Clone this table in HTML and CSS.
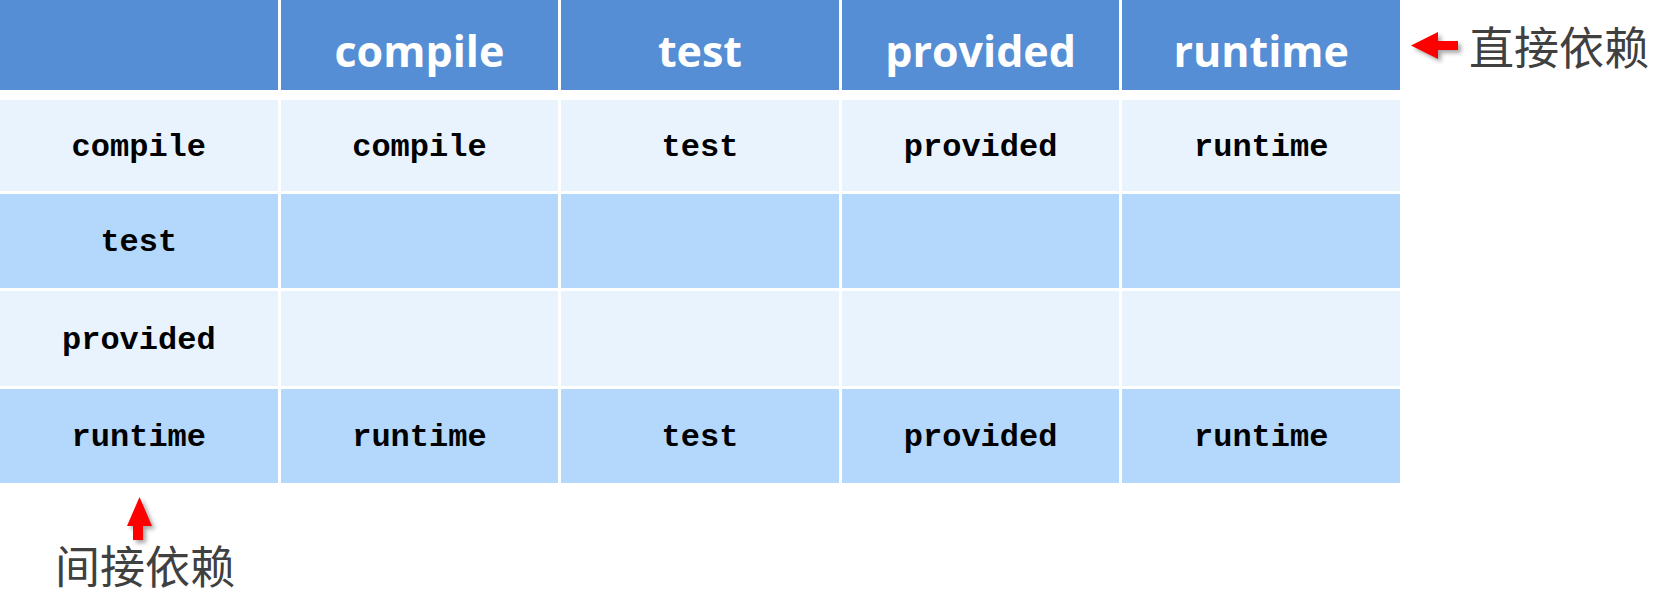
FILE: index.html
```html
<!DOCTYPE html>
<html lang="zh">
<head>
<meta charset="utf-8">
<title>Maven scope 传递</title>
<link rel="stylesheet" href="styles.css">
</head>
<body>
<div class="page">
  <div class="top">
    <div class="table">
      <div class="thead">
        <div class="th"></div>
        <div class="th">compile</div>
        <div class="th">test</div>
        <div class="th">provided</div>
        <div class="th">runtime</div>
      </div>
      <div class="tbody">
        <div class="td light">compile</div>
        <div class="td light">compile</div>
        <div class="td light">test</div>
        <div class="td light">provided</div>
        <div class="td light">runtime</div>

        <div class="td dark">test</div>
        <div class="td dark"></div>
        <div class="td dark"></div>
        <div class="td dark"></div>
        <div class="td dark"></div>

        <div class="td light">provided</div>
        <div class="td light"></div>
        <div class="td light"></div>
        <div class="td light"></div>
        <div class="td light"></div>

        <div class="td dark">runtime</div>
        <div class="td dark">runtime</div>
        <div class="td dark">test</div>
        <div class="td dark">provided</div>
        <div class="td dark">runtime</div>
      </div>
    </div>
    <div class="callout-right">
      <svg class="arrow-left" width="47" height="27" viewBox="0 0 47 27">
        <polygon points="0,13.5 27,0 27,9 47,9 47,18 27,18 27,27" fill="#ff0000"/>
      </svg>
      <span class="label">直接依赖</span>
    </div>
  </div>
  <div class="callout-bottom">
    <svg class="arrow-up" width="25" height="43" viewBox="0 0 25 43">
      <polygon points="12.5,0 25,29 16,29 16,43 6,43 6,29 0,29" fill="#ff0000"/>
    </svg>
    <span class="label">间接依赖</span>
  </div>
</div>
</body>
</html>
```
FILE: styles.css
```css
html, body {
  margin: 0;
  padding: 0;
  background: #ffffff;
}

.page {
  width: 1666px;
  height: 608px;
  display: flex;
  flex-direction: column;
}

.top {
  display: flex;
  align-items: flex-start;
}

.table {
  width: 1400px;
  display: flex;
  flex-direction: column;
}

.thead {
  display: grid;
  grid-template-columns: repeat(5, 1fr);
  column-gap: 3px;
  height: 90px;
  margin-bottom: 10px;
}

.th {
  background: #558ed5;
  color: #ffffff;
  font-family: "Open Sans", "Noto Sans", sans-serif;
  font-weight: 700;
  font-size: 43px;
  display: flex;
  align-items: center;
  justify-content: center;
  padding-top: 11px;
  box-sizing: border-box;
}

.tbody {
  display: grid;
  grid-template-columns: repeat(5, 1fr);
  grid-template-rows: 91px 94px 95px 94px;
  gap: 3px;
}

.td {
  display: flex;
  align-items: center;
  justify-content: center;
  padding-top: 3px;
  box-sizing: border-box;
  font-family: "Liberation Mono", "Courier New", monospace;
  font-weight: bold;
  font-size: 32px;
  color: #000000;
}

.light {
  background: #e9f3fe;
}

.dark {
  background: #b3d8fc;
}

.callout-right {
  height: 90px;
  display: flex;
  align-items: center;
  margin-left: 11px;
  gap: 11px;
}

.label {
  font-family: "Noto Sans CJK SC", "Noto Sans", sans-serif;
  font-size: 45px;
  line-height: 1;
  color: #404040;
  white-space: nowrap;
}

.arrow-left,
.arrow-up {
  display: block;
  filter: drop-shadow(3px 3px 2px rgba(0, 0, 0, 0.35));
}

.callout-bottom {
  display: flex;
  flex-direction: column;
  align-items: flex-start;
  margin-left: 55px;
  margin-top: 14px;
}

.arrow-up {
  margin-left: 72px;
}

.callout-bottom .label {
  margin-top: 2px;
}
```
